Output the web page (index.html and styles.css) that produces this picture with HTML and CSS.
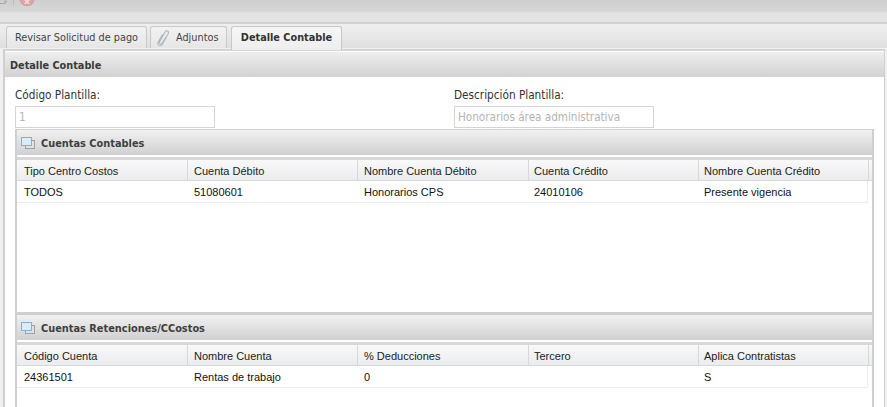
FILE: index.html
```html
<!DOCTYPE html>
<html lang="es">
<head>
<meta charset="utf-8">
<title>Detalle Contable</title>
<link rel="stylesheet" href="styles.css">
</head>
<body>
<div class="window">
  <div class="topbar">
    <svg class="mini-icon" width="8" height="5" viewBox="0 0 8 5"><path d="M0 3.500h5V0M5 3.500 7 1" fill="none" stroke="#aaa" stroke-width="1"/></svg>
    <span class="top-sep"></span>
    <svg class="close-icon" width="16" height="6" viewBox="0 0 16 6"><circle cx="8" cy="-1" r="7" fill="#dfa3a3" stroke="#d59a9a"/><path d="M5 -1 8 1.800 11 -1M8 1.800 5.800 4M8 1.800 10.200 4" stroke="#f1dcdc" stroke-width="1.500" fill="none"/></svg>
  </div>
  <div class="tabbar">
    <div class="tab tab-first">Revisar Solicitud de pago</div>
    <div class="tab tab-clip">
      <svg class="clip" width="14" height="18" viewBox="0 0 14 18"><path d="M11.800 5.500 6 14.200c-1 1.500-3.200.4-2.400-1.400L9.300 2.600c1-1.700 3.800-.6 3.100 1.600L6.300 15.500c-1.500 2.400-5.400 1-4.300-1.900L6.500 5.500" fill="none" stroke="#aeb6be" stroke-width="1.100"/></svg>
      Adjuntos
    </div>
    <div class="tab tab-active">Detalle Contable</div>
  </div>
  <div class="panel">
    <div class="panel-head">Detalle Contable</div>
    <div class="panel-body">
      <div class="fields">
        <div class="field field-code">
          <label class="field-label">Código Plantilla:</label>
          <div class="field-input">1</div>
        </div>
        <div class="field">
          <label class="field-label">Descripción Plantilla:</label>
          <div class="field-input">Honorarios área administrativa</div>
        </div>
      </div>
      <section class="section section-first">
        <div class="section-head">
          <svg class="stack" width="15" height="13" viewBox="0 0 15 13"><rect x="4.500" y="3.500" width="9" height="8" fill="#e2e2e2" stroke="#a0a0a0"/><rect x="0.500" y="0.500" width="10" height="8" fill="#dcebf6" stroke="#86b0cf"/></svg>
          Cuentas Contables
        </div>
        <div class="grid">
          <div class="grid-row grid-header">
            <div class="cell">Tipo Centro Costos</div>
            <div class="cell">Cuenta Débito</div>
            <div class="cell">Nombre Cuenta Débito</div>
            <div class="cell">Cuenta Crédito</div>
            <div class="cell">Nombre Cuenta Crédito</div>
          </div>
          <div class="grid-row grid-data">
            <div class="cell">TODOS</div>
            <div class="cell">51080601</div>
            <div class="cell">Honorarios CPS</div>
            <div class="cell">24010106</div>
            <div class="cell">Presente vigencia</div>
          </div>
        </div>
      </section>
      <section class="section section-second">
        <div class="section-head">
          <svg class="stack" width="15" height="13" viewBox="0 0 15 13"><rect x="4.500" y="3.500" width="9" height="8" fill="#e2e2e2" stroke="#a0a0a0"/><rect x="0.500" y="0.500" width="10" height="8" fill="#dcebf6" stroke="#86b0cf"/></svg>
          Cuentas Retenciones/CCostos
        </div>
        <div class="grid">
          <div class="grid-row grid-header">
            <div class="cell">Código Cuenta</div>
            <div class="cell">Nombre Cuenta</div>
            <div class="cell">% Deducciones</div>
            <div class="cell">Tercero</div>
            <div class="cell">Aplica Contratistas</div>
          </div>
          <div class="grid-row grid-data">
            <div class="cell">24361501</div>
            <div class="cell">Rentas de trabajo</div>
            <div class="cell">0</div>
            <div class="cell"></div>
            <div class="cell">S</div>
          </div>
        </div>
      </section>
    </div>
  </div>
</div>
</body>
</html>
```
FILE: styles.css
```css
html, body {
  margin: 0;
  padding: 0;
  width: 887px;
  height: 407px;
  overflow: hidden;
  background: #fff;
}
.window {
  width: 887px;
  height: 407px;
  overflow: hidden;
  font-family: "DejaVu Sans", sans-serif;
  color: #333;
  background: #f0f0f0;
}
.topbar {
  height: 24px;
  box-sizing: border-box;
  display: flex;
  align-items: flex-start;
  background: linear-gradient(#cfcfcf 0, #d6d6d6 11px, #e2e2e2 13px, #e4e4e4 22px);
  border-bottom: 2px solid #d0d0d0;
  overflow: hidden;
}
.mini-icon { display: block; }
.top-sep {
  width: 1px;
  height: 5px;
  margin-left: 5px;
  background: #bdbdbd;
}
.close-icon { display: block; margin-left: 5px; }
.tabbar {
  height: 24px;
  box-sizing: border-box;
  padding: 2px 0 0 6px;
  display: flex;
  gap: 3px;
  background: linear-gradient(#efefef, #dfdfdf);
}
.tab {
  height: 22px;
  box-sizing: border-box;
  border: 1px solid #c8c8c8;
  border-bottom: 0;
  border-radius: 3px 3px 0 0;
  background: linear-gradient(#f2f2f2, #e6e6e6);
  font-size: 10.800px;
  font-stretch: condensed;
  color: #444;
  display: flex;
  align-items: center;
  justify-content: center;
  gap: 6px;
}
.tab-first { width: 141px; }
.tab-clip {
  width: 77px;
  justify-content: flex-start;
  padding-left: 5px;
}
.tab-active {
  width: 111px;
  height: 24px;
  margin-left: 1px;
  padding-bottom: 2px;
  background: linear-gradient(#f6f6f6, #eeeeee);
  font-weight: bold;
  color: #333;
}
.panel {
  margin: 1px 2px 0 3px;
  border-left: 2px solid #d0d0d0;
  border-right: 1px solid #cfcfcf;
  border-top: 2px solid #d4d4d4;
  background: #fff;
  height: 356px;
}
.panel-head {
  height: 25px;
  margin-top: 1px;
  box-sizing: border-box;
  padding: 1px 0 0 5px;
  line-height: 25px;
  font-size: 10.800px;
  font-stretch: condensed;
  font-weight: bold;
  color: #3a3a3a;
  background: linear-gradient(#eeeeee, #d2d2d2);
}
.panel-body {
  padding: 11px 9px 0 10px;
  background: #fff;
}
.fields {
  display: flex;
  height: 40px;
  margin-bottom: 1px;
}
.field { display: flex; flex-direction: column; }
.field-code { width: 439px; }
.field-label {
  height: 18px;
  line-height: 15px;
  font-size: 11.700px;
  font-stretch: condensed;
  color: #333;
}
.field-input {
  width: 200px;
  height: 22px;
  box-sizing: border-box;
  border: 1px solid #d4d4dc;
  padding-left: 3px;
  line-height: 20px;
  font-size: 11.600px;
  font-stretch: condensed;
  color: #b4b4b4;
}
.section {
  width: 859px;
  box-sizing: border-box;
  border: 1px solid #cfcfcf;
  border-left-width: 2px;
  border-right-width: 2px;
  border-bottom: 0;
}
.section-first { height: 185px; border-bottom: 2px solid #cfcfcf; }
.section-second { height: 100px; }
.section-head {
  height: 27px;
  box-sizing: border-box;
  padding: 1px 0 0 4px;
  display: flex;
  align-items: center;
  gap: 5px;
  font-size: 10.900px;
  font-stretch: condensed;
  font-weight: bold;
  color: #3f3f3f;
  background: linear-gradient(#f1f1f1, #d0d0d0);
  border-bottom: 2px solid #fff;
}
.grid {
  border-top: 3px solid #d8d8d8;
}
.grid-row {
  display: grid;
  grid-template-columns: 171px 170px 171px 170px 170px;
  font-family: "Liberation Sans", Arial, sans-serif;
  font-size: 11px;
}
.cell {
  box-sizing: border-box;
  padding-left: 6px;
  white-space: nowrap;
}
.cell:nth-child(1) { padding-left: 7px; }
.cell:nth-child(4), .cell:nth-child(5) { padding-left: 5px; }
.grid-header {
  width: 855px;
  height: 21px;
  line-height: 23px;
  background: linear-gradient(#f9f9f9, #eaecee);
  border-bottom: 1px solid #d8d8d8;
  box-sizing: border-box;
  color: #222;
}
.grid-header .cell { border-right: 1px solid #d8d8d8; height: 20px; }
.grid-data {
  width: 851px;
  height: 22px;
  line-height: 22px;
  border-bottom: 1px solid #ececec;
  border-right: 1px solid #ececec;
  box-sizing: border-box;
  color: #111;
}
```
